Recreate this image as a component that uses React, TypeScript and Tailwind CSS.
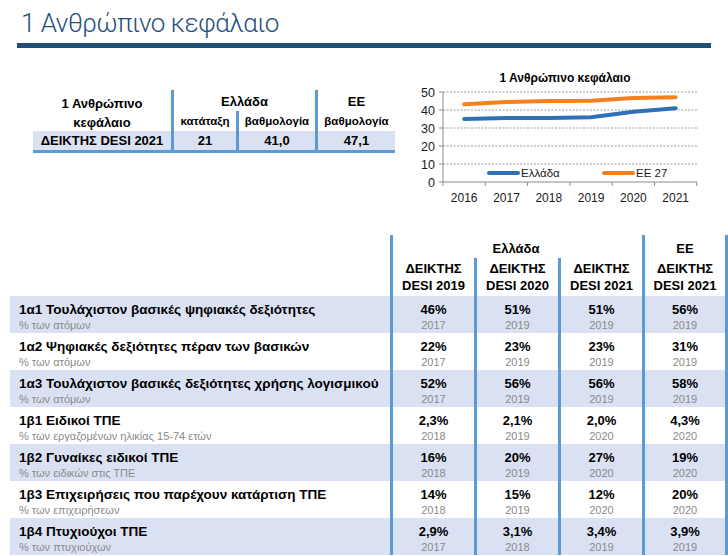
import React from "react";

const band = "bg-[#dae1f2]";
const line = "border-[#5b9bd5]";

type Cell = { v: string; y: string };
type Row = { title: string; sub: string; cells: Cell[] };

const rows: Row[] = [
    { title: "1α1 Τουλάχιστον βασικές ψηφιακές δεξιότητες", sub: "% των ατόμων", cells: [{ v: "46%", y: "2017" }, { v: "51%", y: "2019" }, { v: "51%", y: "2019" }, { v: "56%", y: "2019" }] },
    { title: "1α2 Ψηφιακές δεξιότητες πέραν των βασικών", sub: "% των ατόμων", cells: [{ v: "22%", y: "2017" }, { v: "23%", y: "2019" }, { v: "23%", y: "2019" }, { v: "31%", y: "2019" }] },
    { title: "1α3 Τουλάχιστον βασικές δεξιότητες χρήσης λογισμικού", sub: "% των ατόμων", cells: [{ v: "52%", y: "2017" }, { v: "56%", y: "2019" }, { v: "56%", y: "2019" }, { v: "58%", y: "2019" }] },
    { title: "1β1 Ειδικοί ΤΠΕ", sub: "% των εργαζομένων ηλικίας 15-74 ετών", cells: [{ v: "2,3%", y: "2018" }, { v: "2,1%", y: "2019" }, { v: "2,0%", y: "2020" }, { v: "4,3%", y: "2020" }] },
    { title: "1β2 Γυναίκες ειδικοί ΤΠΕ", sub: "% των ειδικών στις ΤΠΕ", cells: [{ v: "16%", y: "2018" }, { v: "20%", y: "2019" }, { v: "27%", y: "2020" }, { v: "19%", y: "2020" }] },
    { title: "1β3 Επιχειρήσεις που παρέχουν κατάρτιση ΤΠΕ", sub: "% των επιχειρήσεων", cells: [{ v: "14%", y: "2018" }, { v: "15%", y: "2019" }, { v: "12%", y: "2020" }, { v: "20%", y: "2020" }] },
    { title: "1β4 Πτυχιούχοι ΤΠΕ", sub: "% των πτυχιούχων", cells: [{ v: "2,9%", y: "2017" }, { v: "3,1%", y: "2018" }, { v: "3,4%", y: "2019" }, { v: "3,9%", y: "2019" }] },
];

const years = ["2016", "2017", "2018", "2019", "2020", "2021"];
const greece = [35, 35.5, 35.5, 36, 39, 41];
const eu = [43.2, 44.4, 45, 45.2, 46.7, 47.1];

const yOf = (v: number) => 122 - v * 1.8;
const xOf = (i: number) => 43 + 21.2 + i * 42.3;
const pts = (d: number[]) => d.map((v, i) => `${xOf(i)},${yOf(v)}`).join(" ");

function Chart() {
    return (
        <svg width="328" height="150" viewBox="0 0 328 150" className="block" style={{ fontFamily: "'Liberation Sans', Arial, sans-serif" }}>
            <text x="165" y="22" textAnchor="middle" fontSize="12" fontWeight="700" fill="#000">1 Ανθρώπινο κεφάλαιο</text>
            {[50, 40, 30, 20, 10].map((v) => (
                <line key={v} x1="43" x2="297" y1={yOf(v)} y2={yOf(v)} stroke="#9a9a9a" strokeWidth="1" strokeDasharray="2 1.5" />
            ))}
            <line x1="43" x2="297" y1="122" y2="122" stroke="#8c8c8c" strokeWidth="1" />
            <line x1="43" x2="43" y1="32" y2="122" stroke="#8c8c8c" strokeWidth="1" />
            {[50, 40, 30, 20, 10, 0].map((v) => (
                <g key={v}>
                    <line x1="39" x2="43" y1={yOf(v)} y2={yOf(v)} stroke="#8c8c8c" strokeWidth="1" />
                    <text x="35" y={yOf(v) + 4.5} textAnchor="end" fontSize="12.5" fill="#1a1a1a">{v}</text>
                </g>
            ))}
            {[0, 1, 2, 3, 4, 5, 6].map((k) => (
                <line key={k} x1={43 + k * 42.3} x2={43 + k * 42.3} y1="122" y2="126" stroke="#8c8c8c" strokeWidth="1" />
            ))}
            {years.map((y, i) => (
                <text key={y} x={xOf(i)} y="141.5" textAnchor="middle" fontSize="12" fill="#1a1a1a">{y}</text>
            ))}
            <polyline points={pts(eu)} fill="none" stroke="#f7801e" strokeWidth="4" strokeLinecap="round" strokeLinejoin="round" />
            <polyline points={pts(greece)} fill="none" stroke="#2e6fb7" strokeWidth="4" strokeLinecap="round" strokeLinejoin="round" />
            <line x1="89" x2="118" y1="113" y2="113" stroke="#2e6fb7" strokeWidth="4" strokeLinecap="round" />
            <text x="121" y="117" fontSize="11.5" fill="#1a1a1a">Ελλάδα</text>
            <line x1="204" x2="233" y1="113" y2="113" stroke="#f7801e" strokeWidth="4" strokeLinecap="round" />
            <text x="236" y="117" fontSize="11.5" fill="#1a1a1a">ΕΕ 27</text>
        </svg>
    );
}

function SummaryTable() {
    return (
        <div className="grid grid-cols-[138px_65px_79px_80px] grid-rows-[21px_20px_22px] text-black font-bold">
            <div className="row-span-2 flex flex-col items-center pt-[4px] text-[13px] leading-[19px]">
                <span>1 Ανθρώπινο</span>
                <span>κεφάλαιο</span>
            </div>
            <div className={`col-span-2 border-l-[3px] ${line} flex items-end justify-center text-[13px] leading-[18px]`}>Ελλάδα</div>
            <div className={`border-l-[3px] ${line} flex items-end justify-center text-[13px] leading-[18px]`}>ΕΕ</div>
            <div className={`border-l-[3px] ${line} flex items-center justify-center text-[11.5px] pt-[2px]`}>κατάταξη</div>
            <div className={`border-l-[3px] ${line} flex items-center justify-center text-[11.5px] pt-[2px]`}>βαθμολογία</div>
            <div className={`border-l-[3px] ${line} flex items-center justify-center text-[11.5px] pt-[2px]`}>βαθμολογία</div>
            <div className={`${band} border-b-[3px] ${line} flex items-center justify-center text-[13px]`}>ΔΕΙΚΤΗΣ DESI 2021</div>
            <div className={`${band} border-b-[3px] border-l-[3px] ${line} flex items-center justify-center text-[13px]`}>21</div>
            <div className={`${band} border-b-[3px] border-l-[3px] ${line} flex items-center justify-center text-[13px]`}>41,0</div>
            <div className={`${band} border-b-[3px] border-l-[3px] ${line} flex items-center justify-center text-[13px]`}>47,1</div>
        </div>
    );
}

function HeadCell({ top, a, b, full, last }: { top?: string; a: string; b: string; full: boolean; last?: boolean }) {
    return (
        <div className={`flex flex-col h-[61px] ${full ? `border-l-[3px] ${line}` : ""} ${last ? `border-r-[3px] ${line}` : ""}`}>
            <div className="h-[23px] flex items-end justify-center leading-[17px] pb-[1px]">{top}</div>
            <div className={`flex-1 flex flex-col items-center pt-[2px] leading-[17px] ${full ? "" : `border-l-[3px] ${line}`}`}>
                <span>{a}</span>
                <span>{b}</span>
            </div>
        </div>
    );
}

function MainTable() {
    return (
        <div className="ml-[10px] grid grid-cols-[380px_84px_84px_84px_86px] text-black">
            <div className="h-[61px]" />
            <div className="text-[13px] font-bold contents">
                <HeadCell a="ΔΕΙΚΤΗΣ" b="DESI 2019" full />
                <HeadCell top="Ελλάδα" a="ΔΕΙΚΤΗΣ" b="DESI 2020" full={false} />
                <HeadCell a="ΔΕΙΚΤΗΣ" b="DESI 2021" full={false} />
                <HeadCell top="ΕΕ" a="ΔΕΙΚΤΗΣ" b="DESI 2021" full last />
            </div>
            {rows.map((r, i) => {
                const bg = i % 2 === 0 ? band : "bg-white";
                return (
                    <React.Fragment key={r.title}>
                        <div className={`${bg} h-[37px] pl-[9px] pt-[5px]`}>
                            <div className="text-[13.5px] font-bold leading-[18px]">{r.title}</div>
                            <div className="text-[11px] text-[#8a8a8a] leading-[13px]">{r.sub}</div>
                        </div>
                        {r.cells.map((c, j) => (
                            <div key={j} className={`${bg} h-[37px] pt-[5px] border-l-[3px] ${line} ${j === 3 ? "border-r-[3px]" : ""} flex flex-col items-center`}>
                                <div className="text-[13px] font-bold leading-[18px]">{c.v}</div>
                                <div className="text-[11px] text-[#8a8a8a] leading-[13px]">{c.y}</div>
                            </div>
                        ))}
                    </React.Fragment>
                );
            })}
        </div>
    );
}

export default function App() {
    return (
        <div className="w-[728px] h-[556px] overflow-hidden bg-white" style={{ fontFamily: "'Liberation Sans', Arial, sans-serif" }}>
            <div className="pl-[21px] pt-[8px] text-[26px] leading-[30px] text-[#24507e] tracking-[-0.5px]" style={{ fontFamily: "Roboto, 'Liberation Sans', sans-serif", fontWeight: 300 }}>
                1 Ανθρώπινο κεφάλαιο
            </div>
            <div className="mt-[5px] mx-[17px] h-[5px] bg-[#1f4e79]" />
            <div className="mt-[12px] flex h-[150px]">
                <div className="pl-[33px] pt-[30px] w-[400px]">
                    <SummaryTable />
                </div>
                <Chart />
            </div>
            <div className="mt-[25px]">
                <MainTable />
            </div>
        </div>
    );
}
